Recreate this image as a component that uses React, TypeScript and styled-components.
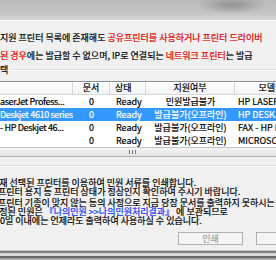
import React from "react";
import styled, { createGlobalStyle } from "styled-components";

const GlobalStyle = createGlobalStyle`
  html, body {
    margin: 0;
    padding: 0;
  }
  body {
    width: 276px;
    height: 260px;
    overflow: hidden;
    background: #f0f0f0;
    font-family: "Noto Sans CJK KR", "Noto Sans", sans-serif;
    font-size: 9px;
    color: #000;
    -webkit-text-stroke: 0.2px currentColor;
  }
`;

const Dialog = styled.div`
  width: 276px;
  height: 260px;
  display: flex;
  flex-direction: column;
  overflow: hidden;
  background: #f0f0f0;
  white-space: nowrap;
`;

const TitleBar = styled.div`
  flex: none;
  height: 20px;
  background: radial-gradient(
      ellipse 34px 9px at 232px 5px,
      rgba(110, 110, 110, 0.55),
      rgba(110, 110, 110, 0)
    ),
    linear-gradient(#b9b9b9, #c6c6c6 70%, #d4d4d4);
  border-bottom: 1px solid #fbfbfb;
`;

const Notice = styled.div`
  padding-top: 8px;
`;

const NoticeLine = styled.div`
  height: 18px;
  line-height: 18px;
`;

const Red = styled.span`
  color: #e00000;
`;

const Blue = styled.span`
  color: #1034ff;
`;

const Legend = styled.div`
  display: flex;
  align-items: center;
  gap: 3px;
  height: 9px;
  line-height: 9px;
  &::after {
    content: "";
    flex: 1;
    border-top: 1px solid #d5dfe5;
    border-bottom: 1px solid #ffffff;
  }
`;

const ListView = styled.div`
  margin-top: 7px;
  border-top: 1px solid #8a8f96;
  background: #ffffff;
  overflow: hidden;
`;

const columns = "73px 37px 36px 89px 73px";

const HeaderRow = styled.div`
  display: grid;
  grid-template-columns: ${columns};
  height: 12px;
  background: linear-gradient(#ffffff, #f2f3f5);
  border-bottom: 1px solid #d5d5d5;
`;

const HeaderCell = styled.div<{ $align?: string }>`
  line-height: 12px;
  text-align: ${({ $align }) => $align || "center"};
  padding-left: ${({ $align }) => ($align === "left" ? "5px" : "0")};
  border-right: 1px solid #d5d5d5;
  overflow: hidden;
`;

const Row = styled.div<{ $selected?: boolean }>`
  display: grid;
  grid-template-columns: ${columns};
  height: 13px;
  line-height: 13px;
  background: ${({ $selected }) => ($selected ? "#3399ff" : "transparent")};
  color: ${({ $selected }) => ($selected ? "#ffffff" : "#000000")};
`;

const Cell = styled.div<{ $align?: string; $pad?: number; $tight?: boolean }>`
  text-align: ${({ $align }) => $align || "left"};
  padding-left: ${({ $pad }) => $pad || 0}px;
  letter-spacing: ${({ $tight }) => ($tight ? "-0.35px" : "0")};
  overflow: hidden;
`;

const HScroll = styled.div`
  height: 8px;
  border-top: 1px solid #c4c4c4;
  border-bottom: 1px solid #b0b0b0;
  background: linear-gradient(#f4f4f4, #e3e3e3);
  display: flex;
  align-items: center;
  justify-content: center;
`;

const Grip = styled.span`
  width: 7px;
  height: 4px;
  margin-left: -12px;
  background: repeating-linear-gradient(
    90deg,
    #7c7c7c 0 1px,
    transparent 1px 3px
  );
`;

const Divider = styled.div`
  margin-top: 8px;
  border-top: 1px solid #d5dfe5;
  border-bottom: 1px solid #ffffff;
`;

const Paragraph = styled.div<{ $top: number }>`
  margin-top: ${({ $top }) => $top}px;
`;

const TextLine = styled.div<{ $shift?: number }>`
  height: 9px;
  line-height: 9px;
  margin-left: ${({ $shift }) => $shift || 0}px;
`;

const ButtonRow = styled.div`
  display: flex;
  gap: 13px;
  margin-top: 7px;
  padding-left: 178px;
`;

const Button = styled.div`
  flex: none;
  width: 63px;
  height: 11px;
  line-height: 11px;
  text-align: center;
  color: #a3a3a3;
  border: 1px solid #adb2b5;
  background: #f4f4f4;
`;

const BottomEdge = styled.div`
  margin-top: auto;
  height: 10px;
  background: linear-gradient(
    #c9c9c9 0 1px,
    #7e7e7e 1px 3px,
    #d9d9d9 3px 6px,
    #666666 6px 8px,
    #a4a4a4 8px
  );
`;

const printers = [
  { name: "aserJet Profess...", docs: "0", state: "Ready", support: "민원발급불가", model: "HP LASERJET" },
  { name: "Deskjet 4610 series", docs: "0", state: "Ready", support: "발급불가(오프라인)", model: "HP DESKJET", selected: true },
  { name: "- HP Deskjet 46...", docs: "0", state: "Ready", support: "발급불가(오프라인)", model: "FAX - HP DESKJET" },
  { name: "", docs: "0", state: "Ready", support: "발급불가(오프라인)", model: "MICROSOFT XPS" },
];

export default function App() {
  return (
    <>
      <GlobalStyle />
      <Dialog>
        <TitleBar />
        <Notice>
          <NoticeLine>
            지원 프린터 목록에 존재해도 <Red>공유프린터를 사용하거나 프린터 드라이버</Red>
          </NoticeLine>
          <NoticeLine>
            <Red>된 경우</Red>에는 발급할 수 없으며, IP로 연결되는 <Red>네트워크 프린터</Red>는 발급
          </NoticeLine>
        </Notice>
        <Legend>택</Legend>
        <ListView>
          <HeaderRow>
            <HeaderCell />
            <HeaderCell>문서</HeaderCell>
            <HeaderCell $align="left">상태</HeaderCell>
            <HeaderCell>지원여부</HeaderCell>
            <HeaderCell>모델명</HeaderCell>
          </HeaderRow>
          {printers.map((p, i) => (
            <Row key={i} $selected={p.selected}>
              <Cell $tight>{p.name}</Cell>
              <Cell $align="center">{p.docs}</Cell>
              <Cell $pad={6}>{p.state}</Cell>
              <Cell $align="center">{p.support}</Cell>
              <Cell $pad={3}>{p.model}</Cell>
            </Row>
          ))}
          <HScroll>
            <Grip />
          </HScroll>
        </ListView>
        <Divider />
        <Paragraph $top={11}>
          <TextLine $shift={-9}>현재 선택된 프린터를 이용하여 민원 서류를 인쇄합니다.</TextLine>
          <TextLine $shift={-2}>프린터 용지 등 프린터 상태가 정상인지 확인하여 주시기 바랍니다.</TextLine>
        </Paragraph>
        <Paragraph $top={2}>
          <TextLine $shift={-2}>프린터 기종이 맞지 않는 등의 사정으로 지금 당장 문서를 출력하지 못하시는</TextLine>
          <TextLine $shift={-9}>
            지정된 민원은 <Blue>『나의민원 &gt;&gt;나의민원처리결과』</Blue> 에 보관되므로
          </TextLine>
          <TextLine $shift={-5}>30일 이내에는 언제라도 출력하여 사용하실 수 있습니다.</TextLine>
        </Paragraph>
        <ButtonRow>
          <Button>인쇄</Button>
          <Button>닫기</Button>
        </ButtonRow>
        <BottomEdge />
      </Dialog>
    </>
  );
}
